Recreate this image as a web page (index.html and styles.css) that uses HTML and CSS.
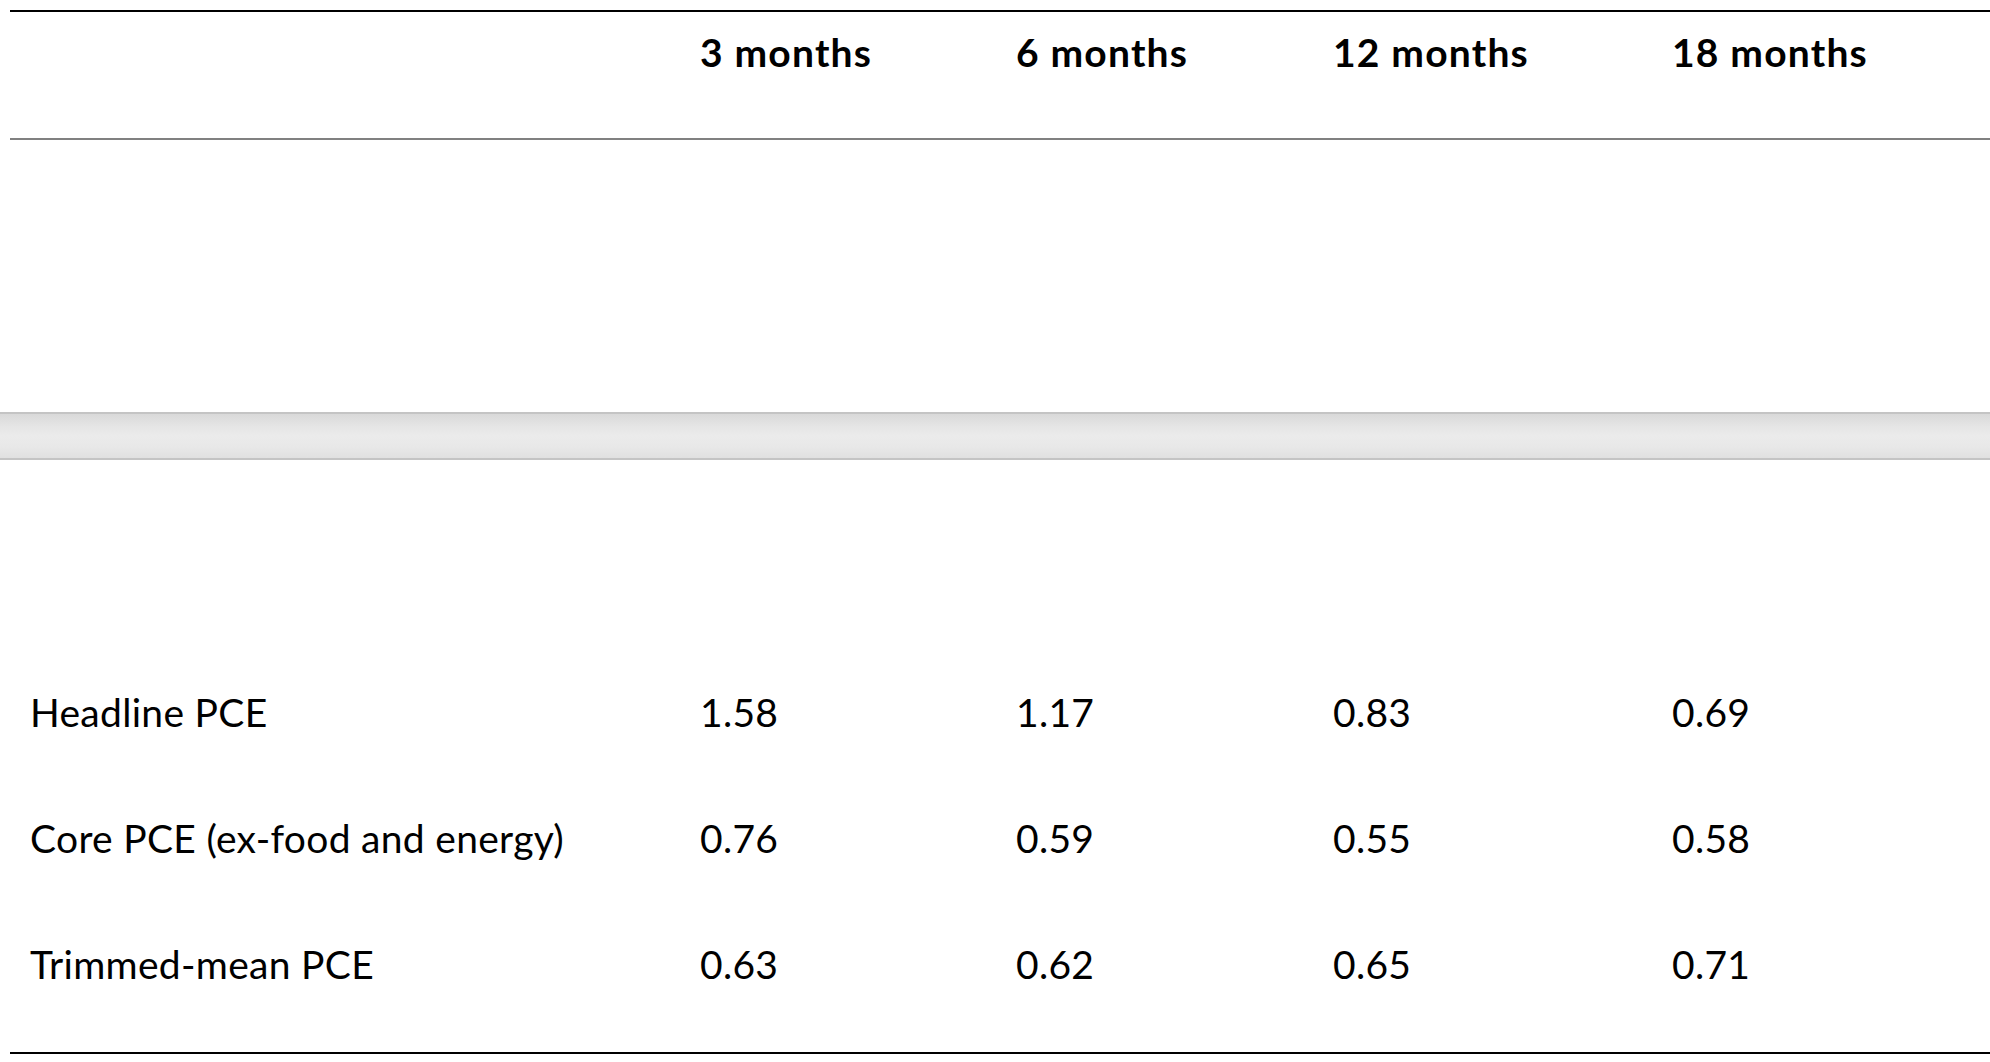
FILE: index.html
```html
<!DOCTYPE html>
<html lang="en">
<head>
<meta charset="utf-8">
<title>PCE inflation table</title>
<link rel="stylesheet" href="styles.css">
</head>
<body>
<div class="page page-top">
  <div class="table table-head">
    <div class="row head-row">
      <div class="cell label"></div>
      <div class="cell">3 months</div>
      <div class="cell">6 months</div>
      <div class="cell">12 months</div>
      <div class="cell">18 months</div>
    </div>
    <div class="spacer spacer-top"></div>
  </div>
</div>
<div class="page-gap"></div>
<div class="page page-bottom">
  <div class="table table-body">
    <div class="spacer spacer-bottom"></div>
    <div class="row data-row">
      <div class="cell label">Headline PCE</div>
      <div class="cell">1.58</div>
      <div class="cell">1.17</div>
      <div class="cell">0.83</div>
      <div class="cell">0.69</div>
    </div>
    <div class="row data-row">
      <div class="cell label">Core PCE (ex-food and energy)</div>
      <div class="cell">0.76</div>
      <div class="cell">0.59</div>
      <div class="cell">0.55</div>
      <div class="cell">0.58</div>
    </div>
    <div class="row data-row">
      <div class="cell label">Trimmed-mean PCE</div>
      <div class="cell">0.63</div>
      <div class="cell">0.62</div>
      <div class="cell">0.65</div>
      <div class="cell">0.71</div>
    </div>
  </div>
</div>
</body>
</html>
```
FILE: styles.css
```css
html, body {
  margin: 0;
  padding: 0;
  background: #ffffff;
  overflow: hidden;
}

body {
  font-family: Lato, "Open Sans", "Liberation Sans", sans-serif;
  color: #000000;
  font-size: 39px;
  line-height: 48px;
  letter-spacing: 0.3px;
}

.page {
  padding-left: 10px;
}

.page-top {
  padding-top: 10px;
}

.table-head {
  border-top: 2px solid #000000;
}

.row {
  display: grid;
  grid-template-columns: 690px 316px 317px 339px 1fr;
}

.cell {
  white-space: nowrap;
}

.label {
  padding-left: 20px;
}

.head-row {
  font-weight: 700;
  letter-spacing: 1.2px;
  padding: 16px 0 62px;
  border-bottom: 2px solid #808080;
}

.spacer-top {
  height: 272px;
}

.page-gap {
  height: 44px;
  border-top: 2px solid #c4c4c4;
  border-bottom: 2px solid #c4c4c4;
  background: linear-gradient(#d9d9d9 0%, #e6e6e6 30%, #ebebeb 50%, #e8e8e8 75%, #e0e0e0 100%);
}

.spacer-bottom {
  height: 214px;
}

.data-row {
  padding: 14px 0 64px;
}

.table-body {
  border-bottom: 2px solid #000000;
}
```
